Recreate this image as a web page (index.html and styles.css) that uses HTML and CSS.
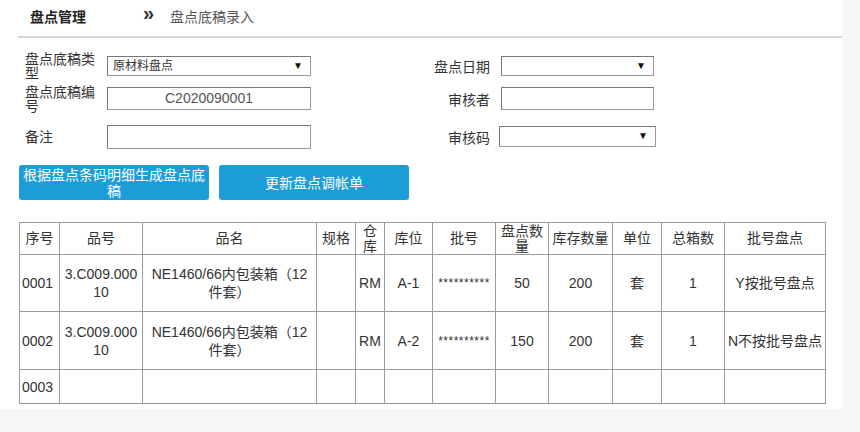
FILE: index.html
```html
<!DOCTYPE html>
<html lang="zh-CN">
<head>
	<meta charset="UTF-8">
	<title>盘点底稿录入</title>
	<link rel="stylesheet" href="styles.css">
</head>
<body>
	<div class="page">
		<div class="crumb">
			<span class="crumb-root">盘点管理</span>
			<span class="crumb-sep">»</span>
			<span class="crumb-cur">盘点底稿录入</span>
		</div>
		<div class="form">
			<label class="lbl">盘点底稿类型</label>
			<div class="field sel sel-type"><span>原材料盘点</span></div>
			<label class="lbl-r">盘点日期</label>
			<div class="field sel sel-date"></div>

			<label class="lbl">盘点底稿编号</label>
			<div class="field txt txt-no">C2020090001</div>
			<label class="lbl-r">审核者</label>
			<div class="field txt txt-user"></div>

			<label class="lbl">备注</label>
			<div class="field txt txt-note"></div>
			<label class="lbl-r">审核码</label>
			<div class="field sel sel-code"></div>
		</div>
		<div class="btns">
			<a href="javascript:;" class="btn">根据盘点条码明细生成盘点底稿</a>
			<a href="javascript:;" class="btn">更新盘点调帐单</a>
		</div>
		<table class="grid">
			<colgroup>
				<col style="width:40px">
				<col style="width:83px">
				<col style="width:174px">
				<col style="width:39px">
				<col style="width:29px">
				<col style="width:48px">
				<col style="width:63px">
				<col style="width:53px">
				<col style="width:64px">
				<col style="width:49px">
				<col style="width:63px">
				<col style="width:101px">
			</colgroup>
			<tr class="head">
				<th>序号</th><th>品号</th><th>品名</th><th>规格</th><th>仓库</th><th>库位</th>
				<th>批号</th><th>盘点数量</th><th>库存数量</th><th>单位</th><th>总箱数</th><th>批号盘点</th>
			</tr>
			<tr class="row-a">
				<td class="no">0001</td><td>3.C009.00010</td><td>NE1460/66内包装箱（12件套）</td><td></td><td>RM</td><td>A-1</td>
				<td class="lot">**********</td><td>50</td><td>200</td><td>套</td><td>1</td><td>Y按批号盘点</td>
			</tr>
			<tr class="row-b">
				<td class="no">0002</td><td>3.C009.00010</td><td>NE1460/66内包装箱（12件套）</td><td></td><td>RM</td><td>A-2</td>
				<td class="lot">**********</td><td>150</td><td>200</td><td>套</td><td>1</td><td>N不按批号盘点</td>
			</tr>
			<tr class="row-c">
				<td class="no">0003</td><td></td><td></td><td></td><td></td><td></td>
				<td></td><td></td><td></td><td></td><td></td><td></td>
			</tr>
		</table>
	</div>
</body>
</html>
```
FILE: styles.css
```css
html,body{
	margin:0;
	height: 100%;
	background: #f6f6f6;
}
body{
	font-family: "Liberation Sans", "Noto Sans CJK SC", sans-serif;
	font-size: 14px;
	color: #333;
}
.page{
	width: 842px;
	height: 409px;
	background: #fff;
	overflow: hidden;
}

.crumb{
	margin-left: 18px;
	height: 32px;
	padding: 0 0 4px 12px;
	border-bottom: 2px solid #d6d6d6;
	display: flex;
	align-items: center;
}
.crumb-root{
	font-weight: bold;
	color: #222;
	width: 113px;
}
.crumb-sep{
	font-weight: bold;
	font-size: 20px;
	width: 27px;
	margin-top: -6px;
}
.crumb-cur{
	color: #555;
}

.form{
	margin: 10px 0 0 25px;
	display: grid;
	grid-template-columns: 82px 204px 190px 153px;
	grid-template-rows: 35px 31px 45px;
	align-items: center;
}
.lbl{
	line-height: 14px;
	width: 72px;
}
.lbl-r{
	text-align: right;
	padding-right: 11px;
}
.field{
	box-sizing: border-box;
	border: 1px solid #9a9a9a;
	border-top-color: #777;
	border-left-color: #777;
	background: #fff;
	position: relative;
}
.sel{
	height: 20px;
	font-size: 12px;
	line-height: 18px;
	padding-left: 5px;
}
.sel:after{
	content: "\25BC";
	position: absolute;
	right: 7px;
	top: 0;
	font-size: 10px;
	color: #111;
}
.txt{
	height: 23px;
}
.txt-no{
	text-align: center;
	line-height: 21px;
	color: #555;
}
.txt-note{
	height: 24px;
}
.sel-code{
	width: 157px;
	margin-left: -2px;
	height: 21px;
}

.btns{
	margin: 6px 0 0 19px;
	display: flex;
	gap: 10px;
}
.btn{
	box-sizing: border-box;
	width: 190px;
	height: 35px;
	background: #1d9dd8;
	border-radius: 3px;
	color: #fff;
	text-decoration: none;
	text-align: center;
	line-height: 16px;
	display: flex;
	align-items: center;
	justify-content: center;
}

.grid{
	margin: 22px 0 0 19px;
	border-collapse: collapse;
	table-layout: fixed;
	width: 807px;
}
.grid th,
.grid td{
	border: 1px solid #9a9a9a;
	padding: 0 2px;
	text-align: center;
	vertical-align: middle;
	line-height: 18px;
	font-weight: normal;
	word-break: break-all;
}
.grid .head th{
	height: 31px;
	line-height: 15px;
}
.grid .row-a td{
	height: 56px;
}
.grid .row-b td{
	height: 57px;
}
.grid .row-c td{
	height: 33px;
}
.grid td.no{
	text-align: left;
	padding-left: 2px;
}
.grid td.lot{
	font-size: 12px;
	letter-spacing: 0.5px;
	padding: 0;
}
```
